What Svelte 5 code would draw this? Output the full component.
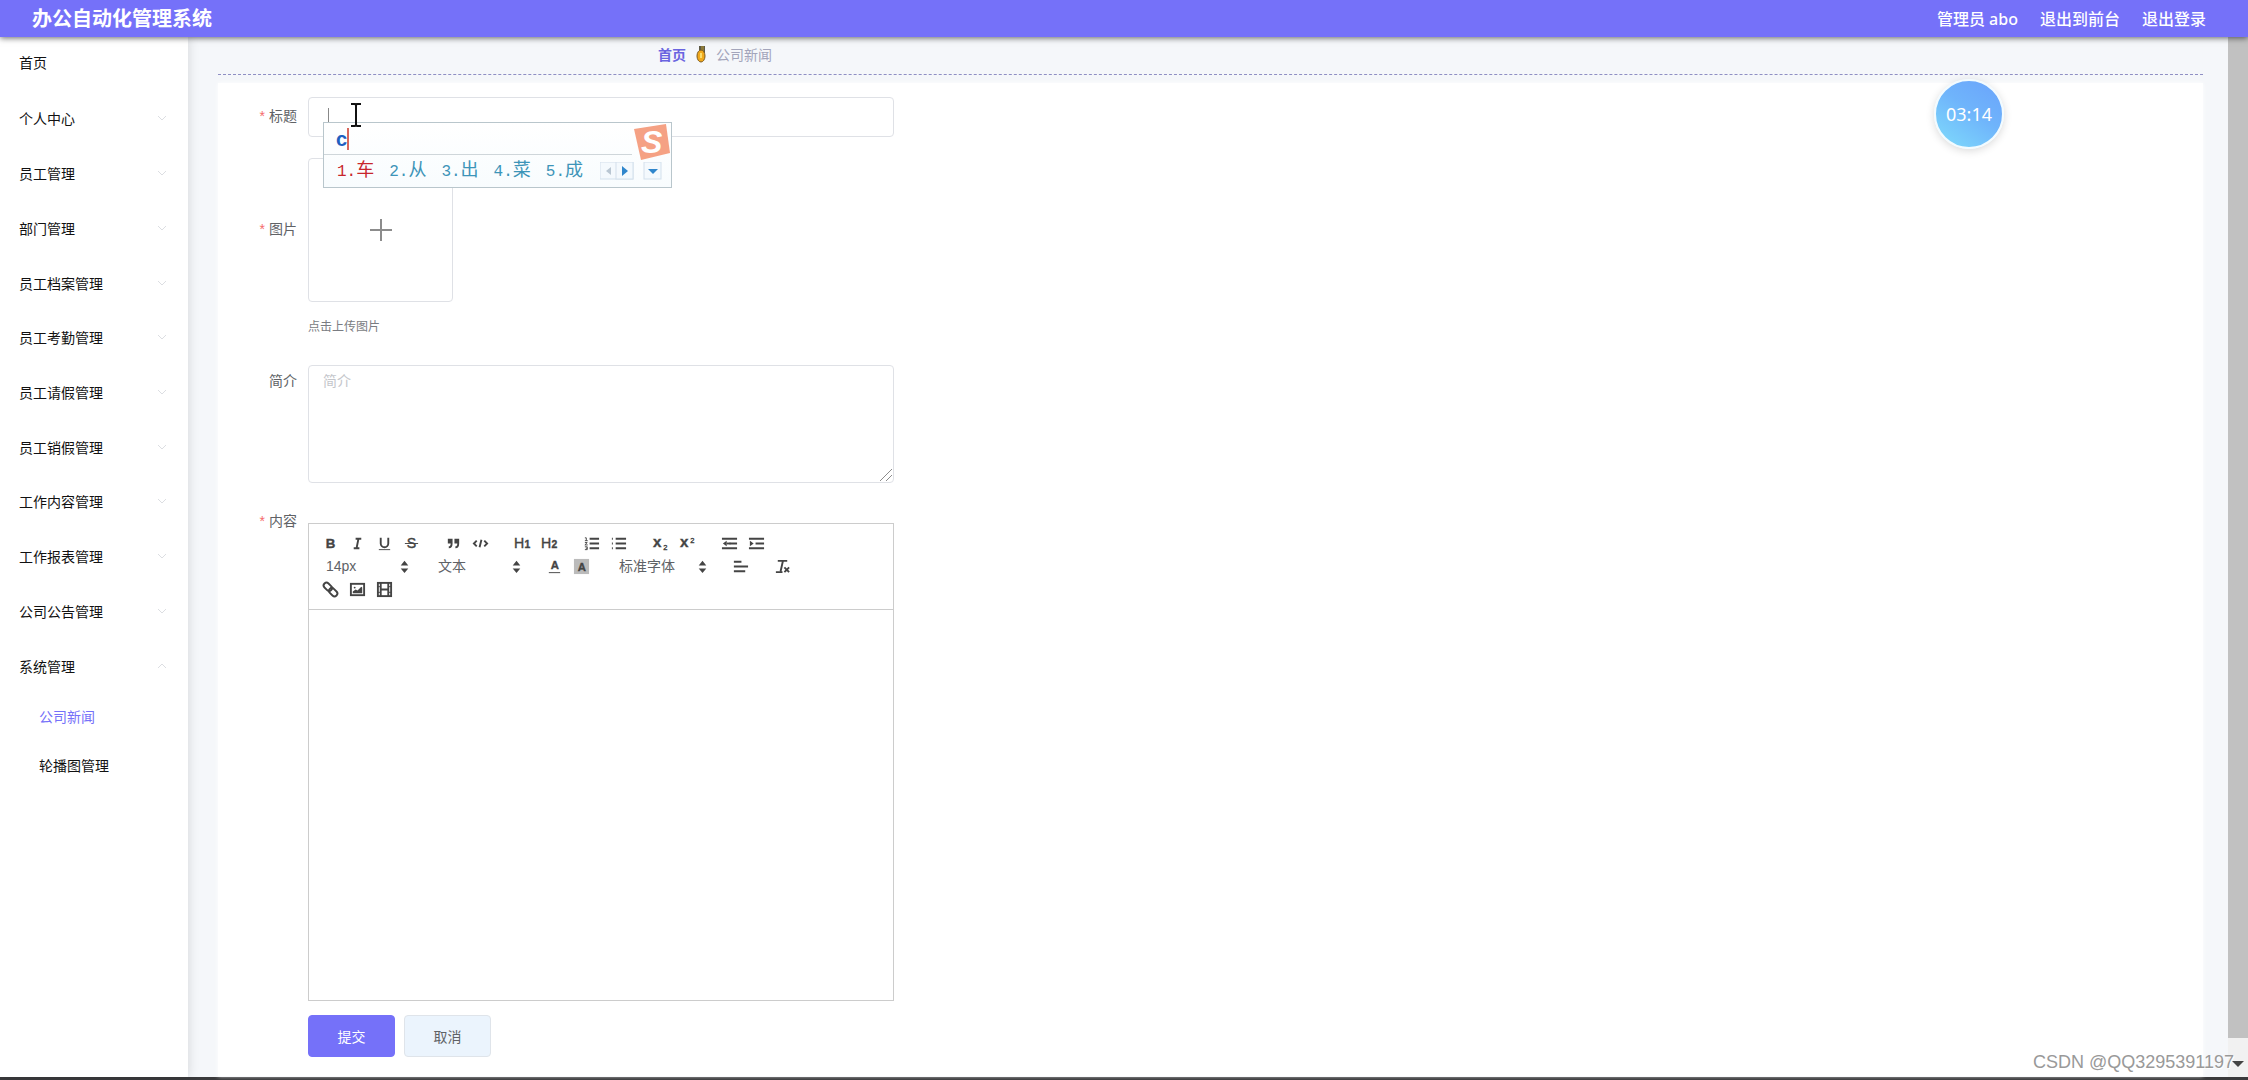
<script>
    const menus = [
        '个人中心',
        '员工管理',
        '部门管理',
        '员工档案管理',
        '员工考勤管理',
        '员工请假管理',
        '员工销假管理',
        '工作内容管理',
        '工作报表管理',
        '公司公告管理',
        '系统管理'
    ];
    const subMenus = ['公司新闻', '轮播图管理'];
    const candidates = ['车', '从', '出', '菜', '成'];

    let opened = $state('系统管理');
    let active = $state('公司新闻');
    let title = $state('');
    let intro = $state('');

    // toolbar icons, all drawn on an 18x18 grid
    const icons = {
        bold: '<text x="4" y="14" font-size="14" font-weight="700">B</text>',
        italic: '<path d="M7 4h6M5 14h6M8 14L10 4"/>',
        underline: '<path d="M5 3v6a4 4 0 0 0 8 0V3"/><path class="thin" d="M3 15.500h12"/>',
        strike: '<text x="4" y="14" font-size="15">S</text><path class="thin" d="M2 9h14"/>',
        quote: '<path class="solid" d="M3 4h5v5c0 3-1 5-4 5v-2c1.500 0 2-1 2-3H3zM10 4h5v5c0 3-1 5-4 5v-2c1.500 0 2-1 2-3h-3z"/>',
        code: '<path d="M5 6L2 9l3 3M13 6l3 3-3 3M10 5L8 13"/>',
        h1: '<text x="0" y="14" font-size="15">H</text><text x="11" y="14" font-size="11" font-weight="700">1</text>',
        h2: '<text x="0" y="14" font-size="15">H</text><text x="11" y="14" font-size="11" font-weight="700">2</text>',
        ordered: '<path d="M7 4h10M7 9h10M7 14h10"/><path class="thin" d="M2 3h1.500v3M2 6h3M2 8h2.500L2 10.500h3M2 12.500h2.500v3H2M3 14h1.500"/>',
        bullet: '<path d="M6 4h11M6 9h11M6 14h11M2 4h1M2 9h1M2 14h1"/>',
        sub: '<text x="1" y="13" font-size="16" font-weight="700">x</text><text x="12" y="16" font-size="8">2</text>',
        sup: '<text x="1" y="13" font-size="16" font-weight="700">x</text><text x="12" y="8" font-size="8">2</text>',
        outdent: '<path d="M1 4h16M9 9h8M1 14h16"/><path class="solid" d="M6 6v6L2 9z"/><path d="M6 9h4"/>',
        indent: '<path d="M1 4h16M8 9h9M1 14h16"/><path class="solid" d="M2 6v6l4-3z"/>',
        color: '<text x="5" y="12" font-size="12" font-weight="700">A</text><path class="thin" d="M3 15.500h12"/>',
        background: '<path class="shade" d="M1 1h16v16H1z"/><text x="5" y="14" font-size="12" font-weight="700">A</text>',
        align: '<path d="M2 4h8M2 9h15M2 14h12"/>',
        clean: '<path d="M4 3h10M9.500 3L7 14M2 15h7M11 10l5 5M16 10l-5 5"/>',
        link: '<g transform="rotate(45 9 9)"><rect x="0" y="6" width="10" height="6" rx="3"/><rect x="8" y="6" width="10" height="6" rx="3"/></g>',
        image: '<rect x="2" y="3" width="14" height="12"/><circle class="solid" cx="6" cy="7" r="1"/><path class="solid" d="M4 13v-2l3-2 2 1 4-4 1 1v6z"/>',
        video: '<rect x="2" y="2" width="14" height="14"/><path d="M5 2v14M13 2v14M5 9h8"/><path class="thin" d="M2 6h3M2 12h3M13 6h3M13 12h3"/>'
    };

    const rows = [
        [
            ['bold', 'italic', 'underline', 'strike'],
            ['quote', 'code'],
            ['h1', 'h2'],
            ['ordered', 'bullet'],
            ['sub', 'sup'],
            ['outdent', 'indent']
        ],
        [
            { label: '字号', value: '14px' },
            { label: '标题级别', value: '文本' },
            ['color', 'background'],
            { label: '字体', value: '标准字体', wide: true },
            ['align'],
            ['clean']
        ],
        [['link', 'image', 'video']]
    ];
</script>

<div class="page">
    <header>
        <h1>办公自动化管理系统</h1>
        <nav>
            <a href="#user">管理员 abo</a>
            <a href="#front">退出到前台</a>
            <a href="#logout">退出登录</a>
        </nav>
    </header>

    <div class="body">
        <aside>
            <a class="home" href="#home">首页</a>
            <div class="menus">
                {#each menus as menu}
                    <button class="menu" onclick={() => (opened = menu)}>
                        <span>{menu}</span>
                        <svg class:up={opened === menu} viewBox="0 0 12 12"><path d="M2 4l4 4 4-4" /></svg>
                    </button>
                {/each}
            </div>
            {#each subMenus as sub}
                <a class="sub" class:active={active === sub} href="#{sub}" onclick={() => (active = sub)}>{sub}</a>
            {/each}
        </aside>

        <main>
            <div class="breadcrumb">
                <a href="#home">首页</a>
                <svg viewBox="0 0 12 18">
                    <path d="M4 1h6v7H4z" fill="#5d5a45" />
                    <path d="M6 1h3v7H6z" fill="#8c7a3a" />
                    <ellipse cx="6" cy="11" rx="4" ry="6" fill="#f0a91c" stroke="#7d5a1e" />
                    <path d="M6 8v5" stroke="#fbdc6a" stroke-width="2" />
                </svg>
                <span>公司新闻</span>
            </div>

            <form class="panel" onsubmit={(e) => e.preventDefault()}>
                <div class="item title">
                    <label class="required" for="title">标题</label>
                    <div class="control">
                        <input id="title" type="text" bind:value={title} />
                        <i class="caret"></i>
                        <div class="ime">
                            <div class="typed"><b>c</b></div>
                            <div class="words">
                                {#each candidates as word, i}
                                    <span class:first={i === 0}><em>{i + 1}.</em>{word}</span>
                                {/each}
                                <svg class="pager" viewBox="0 0 62 18">
                                    <rect x="0" y="0" width="33" height="17" />
                                    <rect x="16" y="0" width="17" height="17" />
                                    <rect x="44" y="0" width="17" height="17" />
                                    <path class="off" d="M11 5v8L6 9z" />
                                    <path d="M22 4v10l6-5z" />
                                    <path d="M48 7h10l-5 5z" />
                                </svg>
                            </div>
                            <svg class="sogou" viewBox="0 0 38 38">
                                <path d="M1 6L33 1l4 29-29 7z" fill="#f5a184" />
                                <text x="8" y="30">S</text>
                            </svg>
                        </div>
                        <svg class="ibeam" viewBox="0 0 10 24">
                            <path d="M0 1h4l1 1 1-1h4M5 2v20M0 23h4l1-1 1 1h4" />
                        </svg>
                    </div>
                </div>

                <div class="item picture">
                    <label class="required" for="picture">图片</label>
                    <div class="control">
                        <button class="upload" id="picture" type="button" aria-label="上传图片">
                            <svg viewBox="0 0 22 22"><path d="M11 0v22M0 11h22" /></svg>
                        </button>
                        <p>点击上传图片</p>
                    </div>
                </div>

                <div class="item intro">
                    <label for="intro">简介</label>
                    <div class="control">
                        <textarea id="intro" placeholder="简介" bind:value={intro}></textarea>
                        <svg class="grip" viewBox="0 0 14 14"><path d="M1 13L13 1M7 13l6-6" /></svg>
                    </div>
                </div>

                <div class="item content">
                    <label class="required" for="content">内容</label>
                    <div class="control">
                        <div class="toolbar">
                            {#each rows as row}
                                <div class="tools">
                                    {#each row as group}
                                        {#if Array.isArray(group)}
                                            <span class="group">
                                                {#each group as name}
                                                    <button type="button" aria-label={name}>
                                                        <svg viewBox="0 0 18 18">{@html icons[name]}</svg>
                                                    </button>
                                                {/each}
                                            </span>
                                        {:else}
                                            <span class="picker" class:wide={group.wide}>
                                                <select aria-label={group.label}>
                                                    <option>{group.value}</option>
                                                </select>
                                                <svg viewBox="0 0 18 18"><path class="solid" d="M9 3l4 5H5zM9 16l4-5H5z" /></svg>
                                            </span>
                                        {/if}
                                    {/each}
                                </div>
                            {/each}
                        </div>
                        <div class="editor" id="content" contenteditable="true" role="textbox" tabindex="0" aria-label="内容"></div>
                    </div>
                </div>

                <div class="actions">
                    <button class="submit" type="submit">提交</button>
                    <button class="cancel" type="button">取消</button>
                </div>
            </form>

            <div class="timer"><span>03:14</span></div>
        </main>

        <div class="scrollbar">
            <div class="thumb"></div>
            <svg viewBox="0 0 12 6"><path d="M0 0h12L6 6z" /></svg>
        </div>
    </div>
    <div class="watermark">CSDN @QQ3295391197</div>
</div>

<style>
    :global(body) {
        background: #f5f7fa;
        font-family: "Liberation Sans", "Noto Sans CJK SC", sans-serif;
        font-size: 14px;
        color: #606266;
    }

    * {
        box-sizing: border-box;
    }

    a {
        text-decoration: none;
        color: inherit;
    }

    button,
    input,
    select,
    textarea {
        font: inherit;
        color: inherit;
        margin: 0;
        outline: none;
    }

    .page {
        position: relative;
        display: flex;
        flex-direction: column;
        min-height: 100vh;
        border-bottom: 3px solid #3a3a3c;
    }

    header {
        position: relative;
        z-index: 2;
        display: flex;
        align-items: center;
        justify-content: space-between;
        height: 37px;
        padding: 0 42px 0 32px;
        background: #7571f9;
        color: #fff;
        box-shadow: 0 1px 6px rgba(0, 0, 0, 0.6);
    }

    header h1 {
        margin: 0;
        font-size: 20px;
        line-height: 36px;
    }

    header nav {
        display: flex;
        gap: 22px;
        font-family: "Noto Sans", "Noto Sans CJK SC", sans-serif;
        font-size: 16px;
        line-height: 36px;
        font-weight: 500;
    }

    .body {
        flex: 1;
        display: flex;
    }

    aside {
        flex: 0 0 188px;
        background: #fff;
        color: #111;
        box-shadow: 1px 0 10px rgba(0, 0, 0, 0.12);
    }

    .home,
    .sub {
        display: block;
        padding-left: 19px;
    }

    .home {
        line-height: 52px;
        margin-bottom: 2px;
    }

    .menus {
        display: grid;
        grid-auto-rows: 1fr;
        height: 602px;
    }

    .menu {
        display: flex;
        align-items: center;
        justify-content: space-between;
        padding: 0 20px 0 19px;
        border: 0;
        background: none;
        cursor: pointer;
    }

    .menu svg {
        width: 12px;
        height: 12px;
        fill: none;
        stroke: #dcdee2;
    }

    .menu svg.up {
        transform: rotate(180deg);
    }

    .sub {
        padding-left: 39px;
        line-height: 49px;
    }

    .sub.active {
        color: #7571f9;
    }

    main {
        position: relative;
        flex: 1;
        padding: 0 25px 0 30px;
    }

    .breadcrumb {
        display: flex;
        align-items: center;
        gap: 9px;
        height: 38px;
        padding: 0 0 4px 440px;
        border-bottom: 1px dashed #8f8fc4;
        color: #a3a5bb;
    }

    .breadcrumb a {
        color: #6a64e0;
        font-weight: 700;
    }

    .breadcrumb svg {
        width: 12px;
        height: 18px;
    }

    .panel {
        margin-top: 8px;
        padding: 14px 0 19px;
        background: #fff;
        box-shadow: 0 0 4px #fff;
    }

    .item {
        display: flex;
    }

    .item label {
        flex: 0 0 90px;
        padding-right: 11px;
        text-align: right;
        line-height: 38px;
    }

    .required::before {
        content: "*";
        margin-right: 4px;
        color: #f56c6c;
    }

    .control {
        position: relative;
        flex: 0 1 586px;
        min-width: 0;
    }

    .title {
        margin-bottom: 21px;
    }

    .title input {
        display: block;
        width: 100%;
        height: 40px;
        padding: 0 14px;
        border: 1px solid #dfe1e6;
        border-radius: 4px;
    }

    .caret {
        position: absolute;
        left: 20px;
        top: 11px;
        width: 1px;
        height: 16px;
        background: #888;
    }

    .ibeam {
        position: absolute;
        z-index: 4;
        left: 43px;
        top: 6px;
        width: 10px;
        height: 24px;
        fill: none;
        stroke: #111;
        stroke-width: 2;
    }

    .ime {
        position: absolute;
        z-index: 3;
        left: 15px;
        top: 25px;
        width: 349px;
        height: 66px;
        border: 1px solid #b9c6cc;
        background: linear-gradient(#fff, #f8fcfe);
    }

    .typed {
        width: 308px;
        height: 32px;
        padding: 5px 0 0 12px;
        border-bottom: 1px solid #cfd6da;
    }

    .typed b {
        display: block;
        width: 13px;
        height: 22px;
        border-right: 2px solid #d9675c;
        color: #1f5fc0;
        font-size: 20px;
        line-height: 22px;
    }

    .words {
        display: flex;
        align-items: center;
        gap: 15px;
        height: 32px;
        padding-left: 13px;
        color: #3d94b8;
        font-size: 18px;
        line-height: 32px;
        white-space: nowrap;
    }

    .words em {
        font-family: "Liberation Mono", monospace;
        font-size: 16px;
        font-style: normal;
    }

    .words .first {
        color: #c8262c;
    }

    .pager {
        flex: none;
        width: 62px;
        height: 18px;
        margin-left: 2px;
        fill: #2f86cc;
    }

    .pager rect {
        fill: #f4f9fd;
        stroke: #d3e0ec;
    }

    .pager .off {
        fill: #b9c6d2;
    }

    .sogou {
        position: absolute;
        right: 0;
        top: 0;
        width: 38px;
        height: 38px;
        overflow: visible;
    }

    .sogou text {
        fill: #fff;
        font-size: 32px;
        font-style: italic;
        font-weight: 700;
    }

    .picture {
        margin-bottom: 28px;
    }

    .item.picture label {
        line-height: 142px;
    }

    .upload {
        display: grid;
        place-items: center;
        width: 145px;
        height: 144px;
        border: 1px solid #dfe1e6;
        border-radius: 4px;
        background: #fff;
    }

    .upload svg {
        width: 22px;
        height: 22px;
        stroke: #8c8c8c;
        stroke-width: 2;
    }

    .picture p {
        margin: 15px 0 0;
        font-size: 12px;
        line-height: 20px;
        color: #7a7c82;
    }

    .intro {
        margin-bottom: 19px;
    }

    .item.intro label {
        line-height: 32px;
    }

    textarea {
        display: block;
        width: 100%;
        height: 118px;
        padding: 5px 14px;
        border: 1px solid #dfe1e6;
        border-radius: 4px;
        line-height: 20px;
        resize: none;
    }

    textarea::placeholder {
        color: #c4c6cb;
    }

    .grip {
        position: absolute;
        right: 1px;
        bottom: 1px;
        width: 14px;
        height: 14px;
        stroke: #8c8c8c;
    }

    .content .control {
        margin-top: 21px;
    }

    .toolbar {
        padding: 8px;
        border: 1px solid #ccc;
    }

    .tools {
        display: flex;
        gap: 15px;
        height: 23px;
    }

    .group {
        display: flex;
    }

    .group button {
        width: 27px;
        height: 23px;
        padding: 2px 5px;
        border: 0;
        background: none;
    }

    .tools svg {
        display: block;
        width: 17px;
        height: 17px;
        fill: none;
        stroke: #444;
        stroke-width: 2;
        overflow: visible;
    }

    .tools :global(text) {
        fill: #444;
        stroke: #444;
        stroke-width: 0.4;
    }

    .tools :global(.thin) {
        stroke-width: 1;
    }

    .tools :global(.solid) {
        fill: #444;
        stroke: none;
    }

    .tools :global(.shade) {
        fill: #bbb;
        stroke: none;
    }

    .picker {
        position: relative;
        width: 97px;
    }

    .picker.wide {
        width: 102px;
    }

    .picker select {
        width: 100%;
        height: 22px;
        padding: 0 9px;
        border: 0;
        background: none;
        appearance: none;
        line-height: 22px;
    }

    .picker svg {
        position: absolute;
        right: 1px;
        top: 3px;
        pointer-events: none;
    }

    .editor {
        height: 391px;
        border: 1px solid #ccc;
        border-top: 0;
        outline: none;
    }

    .actions {
        display: flex;
        gap: 9px;
        margin: 14px 0 0 90px;
    }

    .actions button {
        width: 87px;
        height: 42px;
        border: 1px solid #7571f9;
        border-radius: 4px;
        background: #7571f9;
        color: #fff;
    }

    .actions .cancel {
        border-color: #dfe4ea;
        background: #ebf4fd;
        color: #606266;
    }

    .timer {
        position: absolute;
        right: 224px;
        top: 42px;
        display: grid;
        place-items: center;
        width: 70px;
        height: 70px;
        border: 2px solid #f2fbff;
        border-radius: 50%;
        background: linear-gradient(35deg, #7fdcfb, #6fb4fb 55%, #6aa3fb);
        box-shadow: 0 2px 8px rgba(0, 0, 0, 0.15);
        color: #fff;
        font-family: "Noto Sans", sans-serif;
        font-size: 18px;
    }

    .scrollbar {
        display: flex;
        flex-direction: column;
        flex: 0 0 20px;
        background: #f1f1f1;
    }

    .thumb {
        flex: 1;
        background: #c1c1c1;
    }

    .scrollbar svg {
        width: 12px;
        height: 6px;
        margin: 23px 4px 10px;
        fill: #444;
    }

    .watermark {
        position: absolute;
        right: 14px;
        bottom: 4px;
        color: #999;
        font-size: 18px;
        line-height: 22px;
        text-shadow: 1px 1px 0 #fff;
    }
</style>
